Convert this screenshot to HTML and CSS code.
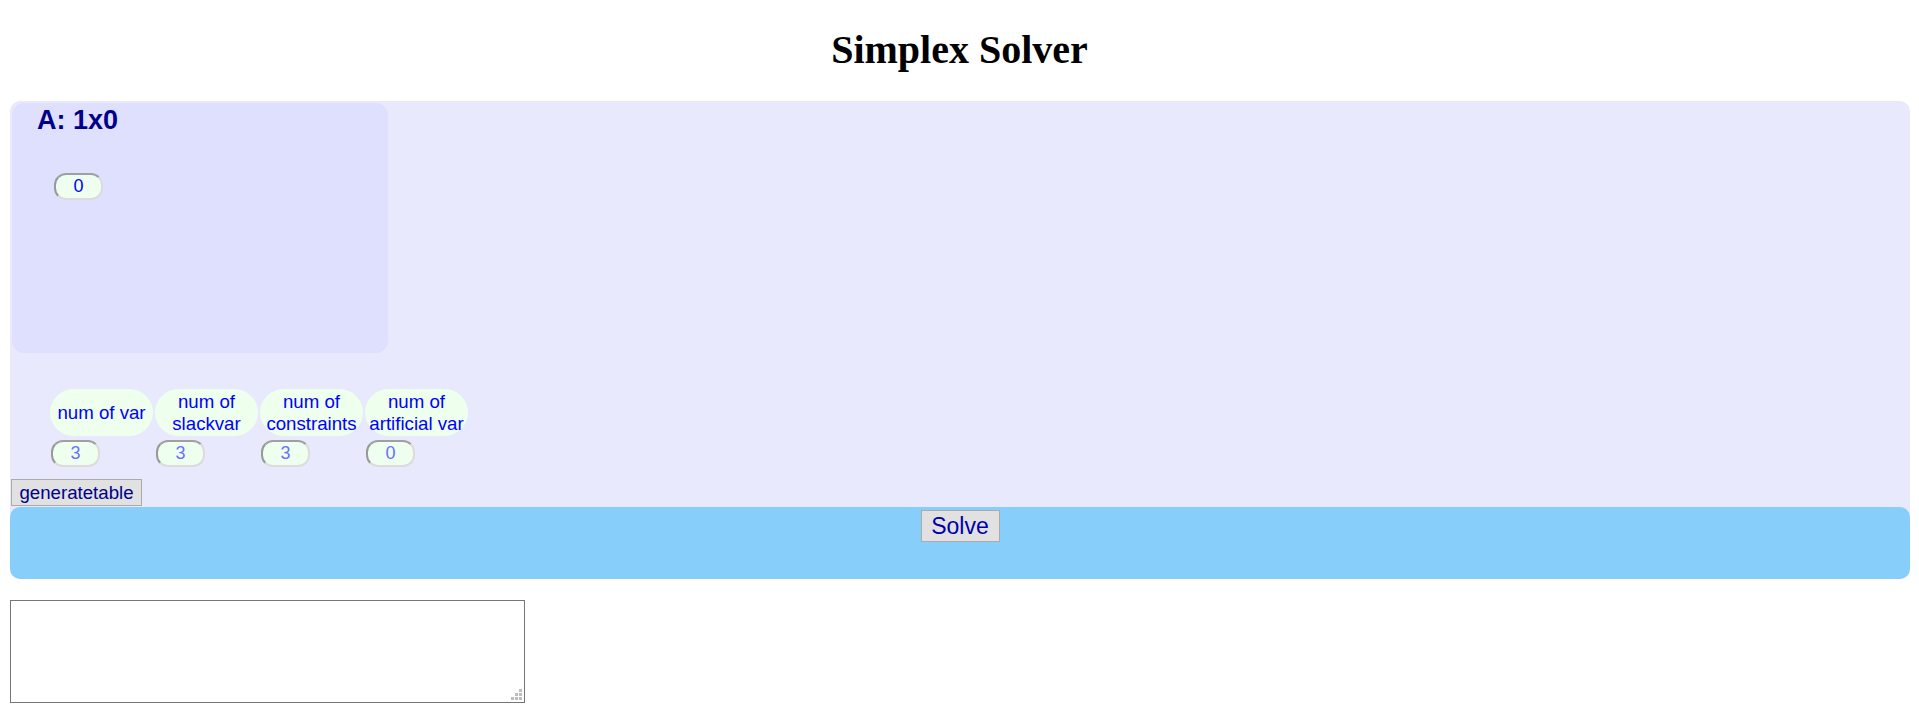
FILE: index.html
```html
<!DOCTYPE html>
<html>
<head>
<meta charset="utf-8">
<title>Simplex Solver</title>
<link rel="stylesheet" href="styles.css">
</head>
<body>
<h1 class="title">Simplex Solver</h1>
<div class="panel">
  <div class="top">
    <div class="matrix">
      <h2 class="matrix-title">A: 1x0</h2>
      <input class="cell cell-a" type="text" value="0">
    </div>
    <div class="params">
      <div class="param">
        <div class="pill">num of var</div>
        <input class="cell cell-p" type="text" placeholder="3">
      </div>
      <div class="param">
        <div class="pill">num of slackvar</div>
        <input class="cell cell-p" type="text" placeholder="3">
      </div>
      <div class="param">
        <div class="pill">num of constraints</div>
        <input class="cell cell-p" type="text" placeholder="3">
      </div>
      <div class="param">
        <div class="pill">num of artificial var</div>
        <input class="cell cell-p" type="text" placeholder="0">
      </div>
    </div>
    <button class="btn gen">generatetable</button>
  </div>
  <div class="solve-bar">
    <button class="btn solve">Solve</button>
  </div>
</div>
<textarea class="out"></textarea>
</body>
</html>
```
FILE: styles.css
```css
html, body {
  margin: 0;
  padding: 0;
  background: #ffffff;
}

body {
  font-family: "Liberation Sans", Arial, sans-serif;
}

.title {
  margin: 27px 0 28px;
  height: 46px;
  line-height: 46px;
  font-family: "Liberation Serif", "Times New Roman", serif;
  font-size: 40px;
  font-weight: bold;
  text-align: center;
  color: #000;
}

.panel {
  margin: 0 9px 0 10px;
  background: #e9e9fe;
  border-radius: 10px;
  display: flex;
  flex-direction: column;
}

.top {
  padding: 2px 0 0 0;
  display: flex;
  flex-direction: column;
  align-items: flex-start;
}

.matrix {
  margin-left: 2px;
  width: 376px;
  height: 250px;
  box-sizing: border-box;
  background: #dfdffe;
  border-radius: 12px;
  padding: 2px 0 0 25px;
  display: flex;
  flex-direction: column;
  align-items: flex-start;
}

.matrix-title {
  margin: 0;
  font-size: 27px;
  line-height: 31px;
  font-weight: bold;
  color: #00008b;
}

.cell {
  box-sizing: border-box;
  width: 49px;
  height: 27px;
  padding: 0;
  border-width: 2px;
  border-style: solid;
  border-color: #a0a0a0 #dcdcdc #dcdcdc #999999;
  border-radius: 12px;
  background: #efffef;
  color: #0000ff;
  font-family: "Liberation Sans", Arial, sans-serif;
  font-size: 18px;
  text-align: center;
  outline: none;
}

.cell::placeholder {
  color: #6b70ff;
  opacity: 1;
}

.cell-a {
  margin: 37px 0 0 17px;
}

.params {
  margin: 36px 0 0 40px;
  display: flex;
  gap: 2px;
}

.param {
  width: 103px;
  display: flex;
  flex-direction: column;
  align-items: flex-start;
  gap: 4px;
}

.pill {
  box-sizing: border-box;
  width: 103px;
  height: 47px;
  padding: 0 3px;
  border-radius: 24px;
  background: #eeffee;
  color: #0000ff;
  font-size: 18.67px;
  line-height: 21.5px;
  text-align: center;
  display: flex;
  align-items: center;
  justify-content: center;
}

.cell-p {
  margin-left: 1px;
}

.btn {
  font-family: "Liberation Sans", Arial, sans-serif;
  background: #e1e1e1;
  border: 1px solid #ababab;
  border-radius: 0;
  cursor: pointer;
}

.gen {
  margin: 12px 0 1px 1px;
  width: 131px;
  height: 27px;
  padding: 0;
  font-size: 18.67px;
  color: #00008b;
}

.solve-bar {
  height: 72px;
  background: #87cefa;
  border-radius: 10px;
  display: flex;
  justify-content: center;
  align-items: flex-start;
  padding-top: 3px;
  box-sizing: border-box;
}

.solve {
  width: 79px;
  height: 32px;
  padding: 0;
  font-size: 23px;
  color: #0000aa;
}

.out {
  display: block;
  box-sizing: border-box;
  margin: 21px 0 0 10px;
  width: 515px;
  height: 103px;
  border: 1px solid #767676;
  background: #ffffff;
}

.out::-webkit-resizer {
  background-color: transparent;
  background-repeat: no-repeat;
  background-position: right 0 bottom 0;
  background-image: url("data:image/svg+xml,%3Csvg xmlns='http://www.w3.org/2000/svg' width='15' height='15'%3E%3Cg fill='%23bdbdbd'%3E%3Crect x='10' y='2' width='3' height='3'/%3E%3Crect x='6' y='6' width='3' height='3'/%3E%3Crect x='10' y='6' width='3' height='3'/%3E%3Crect x='2' y='10' width='3' height='3'/%3E%3Crect x='6' y='10' width='3' height='3'/%3E%3Crect x='10' y='10' width='3' height='3'/%3E%3C/g%3E%3C/svg%3E");
}
```
